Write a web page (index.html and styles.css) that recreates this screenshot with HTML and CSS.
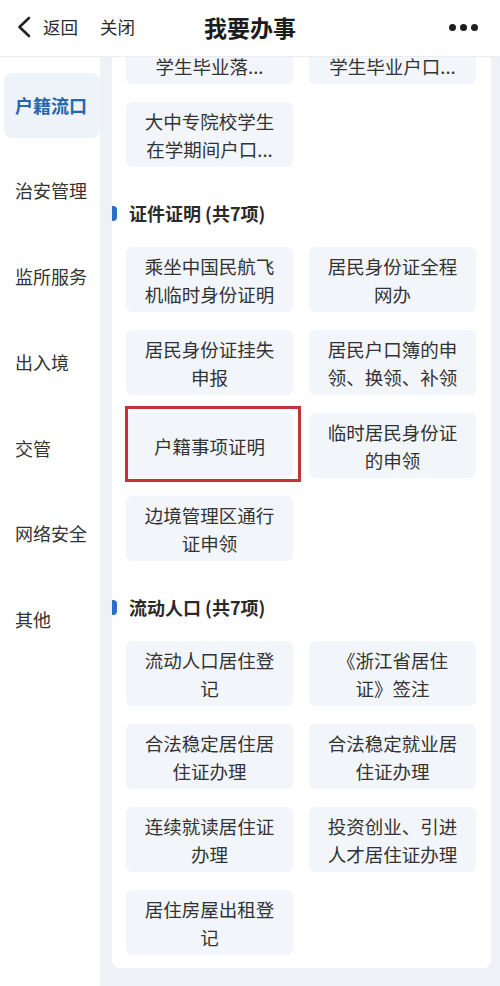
FILE: index.html
```html
<!DOCTYPE html>
<html lang="zh-CN">
<head>
<meta charset="utf-8">
<title>我要办事</title>
<link rel="stylesheet" href="styles.css">
</head>
<body>
<header class="topbar">
  <div class="nav-left">
    <svg class="back-icon" width="16" height="22" viewBox="0 0 16 22"><path d="M13 2 L3.5 11 L13 20" fill="none" stroke="#222" stroke-width="2.6" stroke-linecap="round" stroke-linejoin="round"/></svg>
    <span class="nav-link back-text">返回</span>
    <span class="nav-link">关闭</span>
  </div>
  <h1 class="title">我要办事</h1>
  <div class="nav-right">
    <span class="dot"></span><span class="dot"></span><span class="dot"></span>
  </div>
</header>
<main class="main">
  <nav class="sidebar">
    <div class="side-item active">户籍流口</div>
    <div class="side-item">治安管理</div>
    <div class="side-item">监所服务</div>
    <div class="side-item">出入境</div>
    <div class="side-item">交管</div>
    <div class="side-item">网络安全</div>
    <div class="side-item">其他</div>
  </nav>
  <section class="content">
    <div class="panel">
      <div class="scroller">
        <div class="grid">
          <div class="item">大中专院校毕<br>学生毕业落...</div>
          <div class="item">大中专院校毕<br>学生毕业户口...</div>
          <div class="item">大中专院校学生在学期间户口...</div>
        </div>
        <h2 class="section-title">证件证明 (共7项)</h2>
        <div class="grid">
          <div class="item">乘坐中国民航飞机临时身份证明</div>
          <div class="item">居民身份证全程网办</div>
          <div class="item">居民身份证挂失申报</div>
          <div class="item">居民户口簿的申领、换领、补领</div>
          <div class="item marked">户籍事项证明<span class="mark-box"></span></div>
          <div class="item">临时居民身份证的申领</div>
          <div class="item">边境管理区通行证申领</div>
        </div>
        <h2 class="section-title">流动人口 (共7项)</h2>
        <div class="grid">
          <div class="item">流动人口居住登记</div>
          <div class="item">《浙江省居住证》签注</div>
          <div class="item">合法稳定居住居住证办理</div>
          <div class="item">合法稳定就业居住证办理</div>
          <div class="item">连续就读居住证办理</div>
          <div class="item">投资创业、引进人才居住证办理</div>
          <div class="item">居住房屋出租登记</div>
        </div>
      </div>
    </div>
  </section>
</main>
</body>
</html>
```
FILE: styles.css
```css
* { box-sizing: border-box; }
html, body {
  margin: 0;
  padding: 0;
}
body {
  width: 500px;
  height: 986px;
  overflow: hidden;
  background: #eef2f7;
  font-family: "Noto Sans CJK SC", "Noto Sans", sans-serif;
  color: #333;
}
.topbar {
  height: 57px;
  background: #fff;
  border-bottom: 1px solid #ebedf0;
  display: grid;
  grid-template-columns: 1fr auto 1fr;
  align-items: center;
  padding-bottom: 3px;
  position: relative;
  z-index: 2;
}
.nav-left {
  display: flex;
  align-items: center;
  padding-left: 16px;
}
.back-icon { display: block; }
.nav-link {
  font-size: 17.5px;
  color: #2a2a2a;
  line-height: 24px;
}
.back-text { margin-left: 11px; margin-right: 22px; }
.title {
  margin: 0;
  font-size: 23px;
  font-weight: 700;
  color: #1c1c1c;
  line-height: 30px;
}
.nav-right {
  display: flex;
  justify-content: flex-end;
  gap: 4px;
  padding-right: 22px;
  padding-top: 2px;
}
.dot {
  width: 7px;
  height: 7px;
  border-radius: 50%;
  background: #1e1e1e;
}
.main {
  display: flex;
  height: 929px;
}
.sidebar {
  width: 100px;
  flex: none;
  background: #fff;
  padding-top: 16px;
}
.side-item {
  height: 65px;
  margin-bottom: 20.8px;
  margin-left: 4px;
  padding-left: 11px;
  padding-bottom: 2px;
  display: flex;
  align-items: center;
  font-size: 18px;
  color: #333;
  border-radius: 8px;
}
.side-item.active {
  background: #eef3f9;
  color: #2865b0;
  font-weight: 700;
}
.content {
  flex: 1;
  padding: 0 9px 18px 12px;
  display: flex;
}
.panel {
  flex: 1;
  background: #fff;
  border-radius: 0 0 8px 8px;
  overflow: hidden;
}
.scroller {
  margin-top: -38px;
  padding: 0 15px 0 14px;
}
.grid {
  display: grid;
  grid-template-columns: 167px 167px;
  grid-auto-rows: 65px;
  column-gap: 16px;
  row-gap: 18px;
}
.item {
  position: relative;
  background: #f2f5f9;
  border-radius: 6px;
  display: flex;
  align-items: center;
  justify-content: center;
  text-align: center;
  padding: 0 17px;
  font-size: 18.5px;
  line-height: 28px;
  color: #333;
}
.mark-box {
  position: absolute;
  left: -1px;
  top: -7px;
  right: -8px;
  bottom: -4px;
  border: 3px solid #c4323b;
}
.section-title {
  display: flex;
  align-items: center;
  margin: 33px 0 21px -14px;
  height: 26px;
  font-size: 18px;
  font-weight: 700;
  color: #2a2a2a;
  line-height: 26px;
}
.section-title::before {
  content: "";
  width: 5px;
  height: 15px;
  background: #2c6dcc;
  border-radius: 0 4px 4px 0;
  margin-right: 12px;
}
```
